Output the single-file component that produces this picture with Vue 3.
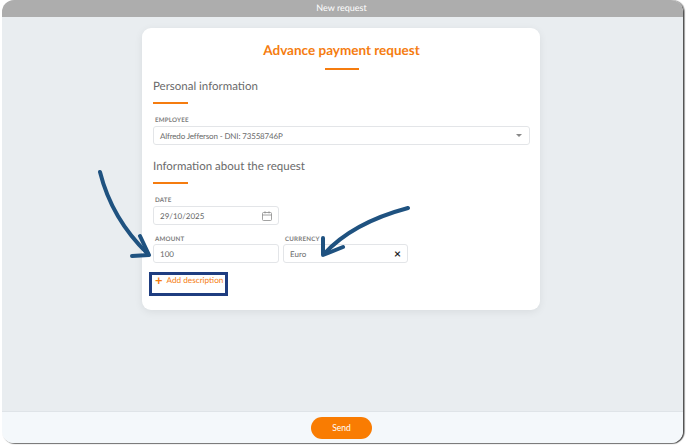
<template>
  <div class="page">
    <div class="window">
      <div class="topbar">New request</div>
      <div class="content">
        <div class="card">
          <h1 class="title">Advance payment request</h1>
          <div class="title-line"></div>

          <h2 class="section">Personal information</h2>
          <div class="section-line"></div>
          <label class="field-label first">EMPLOYEE</label>
          <div class="input">
            <span class="tight">Alfredo Jefferson - DNI: 73558746P</span>
            <span class="caret"></span>
          </div>

          <h2 class="section second">Information about the request</h2>
          <div class="section-line"></div>
          <label class="field-label first">DATE</label>
          <div class="input half">
            <span>29/10/2025</span>
            <svg class="cal" width="10" height="10" viewBox="0 0 10 10" fill="none" stroke="#8a8a8a" stroke-width="0.8">
              <rect x="0.5" y="1.5" width="9" height="8" rx="1" />
              <path d="M0.5 4H9.5M3 0.3V2.4M7 0.3V2.4" />
            </svg>
          </div>

          <div class="row">
            <div class="col">
              <label class="field-label">AMOUNT</label>
              <div class="input"><span>100</span></div>
            </div>
            <div class="col">
              <label class="field-label">CURRENCY</label>
              <div class="input">
                <span>Euro</span>
                <span class="clear">×</span>
              </div>
            </div>
          </div>

          <div class="add-row">
            <span class="plus">+</span>
            <span>Add description</span>
          </div>
        </div>
      </div>
      <div class="footer">
        <button class="send">Send</button>
      </div>
    </div>

    <!-- annotations drawn over the screenshot -->
    <div class="highlight"></div>
    <svg class="arrows" width="688" height="448" viewBox="0 0 688 448" fill="none" stroke="#1f5280" stroke-width="4" stroke-linecap="round" stroke-linejoin="round">
      <path d="M100 172C106 196 118 225 148 254" />
      <path d="M140 236L149 255L132 256" />
      <path d="M408 208C378 216 346 230 324 254" />
      <path d="M323 238L323 255L343 247" />
    </svg>
  </div>
</template>

<script setup>
</script>

<style>
html, body {
  margin: 0;
  background: #fff;
}
</style>

<style scoped>
.page {
  position: relative;
  width: 688px;
  height: 448px;
  overflow: hidden;
  padding: 0 0 0 2px;
  box-sizing: border-box;
  font-family: Lato, "Noto Sans", sans-serif;
  text-rendering: geometricPrecision;
}

.window {
  width: 681px;
  height: 443px;
  display: flex;
  flex-direction: column;
  border-radius: 12px;
  overflow: hidden;
  box-shadow: 1px 1px 1px rgba(0, 0, 0, 0.55), 2px 0 1px rgba(0, 0, 0, 0.35);
}

.topbar {
  height: 17px;
  flex: none;
  background: #adadad;
  color: #fff;
  font-size: 9px;
  line-height: 16px;
  text-align: center;
  padding-right: 2px;
}

.content {
  flex: 1;
  background: #e9edf0;
  display: flex;
  justify-content: center;
  align-items: flex-start;
  padding-top: 11px;
  padding-right: 3px;
  border-bottom: 1px solid #dfe4e8;
}

.card {
  width: 398px;
  height: 282px;
  box-sizing: border-box;
  background: #fff;
  border-radius: 9px;
  padding: 13px 10px 0 11px;
  box-shadow: 0 2px 8px rgba(0, 0, 0, 0.07);
}

.title {
  margin: 0;
  font-size: 13.5px;
  line-height: 18px;
  font-weight: 700;
  color: #f57c0f;
  text-align: center;
}

.title-line {
  width: 34px;
  height: 2px;
  margin: 9px auto 0;
  background: #f57c0f;
}

.section {
  margin: 8px 0 0;
  font-size: 11.5px;
  line-height: 18px;
  font-weight: 400;
  color: #6a6a6a;
}

.section.second {
  margin-top: 13px;
}

.section-line {
  width: 35px;
  height: 2px;
  margin-top: 6px;
  background: #f57c0f;
}

.field-label {
  display: block;
  font-size: 6.2px;
  line-height: 9px;
  font-weight: 700;
  letter-spacing: 0.2px;
  color: #7c7c7c;
  padding-left: 2px;
  margin-bottom: 1px;
}

.field-label.first {
  margin-top: 12px;
}

.input {
  height: 19px;
  box-sizing: border-box;
  border: 1px solid #e3e5e8;
  border-radius: 3px;
  background: #fff;
  padding: 0 6px;
  display: flex;
  align-items: center;
  justify-content: space-between;
  font-size: 8px;
  color: #6a6a6a;
}

.tight {
  letter-spacing: -0.15px;
}

.input.half {
  width: 126px;
}

.caret {
  width: 0;
  height: 0;
  margin-right: 1px;
  border-left: 3px solid transparent;
  border-right: 3px solid transparent;
  border-top: 3px solid #888;
}

.row {
  display: flex;
  gap: 4px;
  margin-top: 9px;
}

.col {
  width: 126px;
}

.col + .col {
  width: 125px;
}

.col .field-label {
  padding-top: 1px;
  margin-bottom: 0;
}

.clear {
  font-size: 12px;
  line-height: 12px;
  font-weight: 700;
  color: #222;
}

.add-row {
  display: flex;
  align-items: center;
  gap: 4px;
  margin: 10px 0 0 2px;
  font-size: 8.2px;
  line-height: 14px;
  color: #f57c0f;
}

.plus {
  font-size: 13px;
  font-weight: 700;
  line-height: 14px;
}

.footer {
  height: 31px;
  flex: none;
  box-sizing: border-box;
  background: #f4f8fb;
  display: flex;
  justify-content: center;
  align-items: flex-start;
  padding-top: 5px;
  padding-right: 2px;
}

.send {
  width: 61px;
  height: 22px;
  border: none;
  border-radius: 11px;
  background: #f97c02;
  color: #fff;
  font-family: inherit;
  font-size: 8.5px;
  font-weight: 400;
  padding: 0;
}

.highlight {
  position: absolute;
  left: 149px;
  top: 272px;
  width: 79px;
  height: 24px;
  box-sizing: border-box;
  border: 3px solid #1f3d80;
}

.arrows {
  position: absolute;
  left: 0;
  top: 0;
  pointer-events: none;
}
</style>
